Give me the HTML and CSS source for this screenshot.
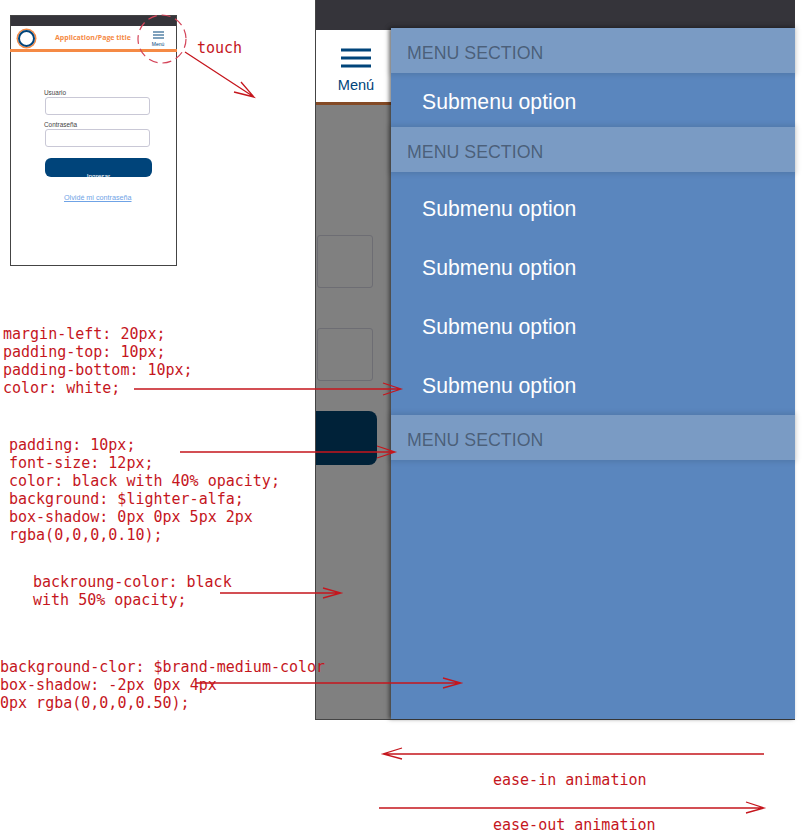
FILE: index.html
```html
<!DOCTYPE html>
<html lang="en">
<head>
    <meta charset="UTF-8">
    <meta name="viewport" content="width=device-width, initial-scale=1.0">
    <link rel="stylesheet" href="styles.css">
    <title>Menu spec</title>
</head>
<body>
    <div class="canvas">

        <div class="mini-phone">
            <div class="mini-status"></div>
            <div class="mini-header">
                <span class="mini-logo"></span>
                <span class="mini-title">Application/Page title</span>
                <div class="mini-menu">
                    <svg width="11" height="8" viewBox="0 0 11 8"><path d="M0 1h11M0 4h11M0 7h11" stroke="#00447a" stroke-width="1.2"/></svg>
                    <span>Menú</span>
                </div>
            </div>
            <div class="mini-form">
                <label class="mini-label">Usuario</label>
                <div class="mini-input"></div>
                <label class="mini-label">Contraseña</label>
                <div class="mini-input"></div>
                <div class="mini-button"><span>Ingresar</span></div>
                <a class="mini-link">Olvidé mi contraseña</a>
            </div>
        </div>

        <div class="device">
            <div class="device-status"></div>
            <div class="device-header">
                <div class="menu-toggle">
                    <svg width="30" height="20" viewBox="0 0 30 20"><path d="M0 2h30M0 10h30M0 18h30" stroke="#00447a" stroke-width="3"/></svg>
                    <span>Menú</span>
                </div>
            </div>
            <div class="device-body">
                <div class="ghost-input"></div>
                <div class="ghost-input"></div>
                <div class="ghost-button"></div>
            </div>
            <div class="drawer">
                <div class="menu-section">MENU SECTION</div>
                <div class="menu-group">
                    <div class="menu-option">Submenu option</div>
                </div>
                <div class="menu-section">MENU SECTION</div>
                <div class="menu-group menu-group-long">
                    <div class="menu-option">Submenu option</div>
                    <div class="menu-option">Submenu option</div>
                    <div class="menu-option">Submenu option</div>
                    <div class="menu-option">Submenu option</div>
                </div>
                <div class="menu-section">MENU SECTION</div>
            </div>
        </div>

        <svg class="marks" width="806" height="831" viewBox="0 0 806 831">
            <circle class="touch-ring" cx="162" cy="39" r="24"/>
            <path class="arrow" d="M185 52L254 97M241 82L254 97L234 92"/>
            <path class="arrow" d="M134 389H401M383 383L401 389L383 395"/>
            <path class="arrow" d="M180 452H395M377 446L395 452L377 458"/>
            <path class="arrow" d="M220 593H341M323 588L341 593L323 598"/>
            <path class="arrow" d="M196 683H461M443 678L461 683L443 688"/>
            <path class="arrow" d="M764 754H383M402 748L383 754L402 759"/>
            <path class="arrow" d="M379 808H764M746 802L764 808L746 813"/>
        </svg>

        <div class="note note-touch">touch</div>
        <div class="note note-option">margin-left: 20px;<br>padding-top: 10px;<br>padding-bottom: 10px;<br>color: white;</div>
        <div class="note note-section">padding: 10px;<br>font-size: 12px;<br>color: black with 40% opacity;<br>background: $lighter-alfa;<br>box-shadow: 0px 0px 5px 2px<br>rgba(0,0,0,0.10);</div>
        <div class="note note-overlay">backroung-color: black<br>with 50% opacity;</div>
        <div class="note note-drawer">background-clor: $brand-medium-color<br>box-shadow: -2px 0px 4px<br>0px rgba(0,0,0,0.50);</div>
        <div class="note note-in">ease-in animation</div>
        <div class="note note-out">ease-out animation</div>
    </div>
</body>
</html>
```
FILE: styles.css
```css
body {
    margin: 0;
    background-color: #fff;
    font-family: "Liberation Sans", Arial, sans-serif;
}

.canvas {
    position: relative;
    width: 806px;
    height: 831px;
}

/* small phone, top left */
.mini-phone {
    position: absolute;
    left: 10px;
    top: 15px;
    width: 165px;
    height: 249px;
    border: 1px solid #444;
    display: flex;
    flex-direction: column;
}

.mini-status {
    height: 10px;
    background-color: #35343a;
}

.mini-header {
    height: 23px;
    border-bottom: 3px solid #f58a45;
    margin: 0 -1px;
    padding: 0 10px 0 7px;
    display: flex;
    align-items: center;
}

.mini-logo {
    width: 13px;
    height: 13px;
    border: 2px solid #00447a;
    border-radius: 50%;
    box-shadow: 0 0 0 1.5px #f58a45;
    margin-left: 1px;
    margin-top: 1px;
}

.mini-title {
    flex: 1;
    margin-left: 20px;
    color: #f58a45;
    font-family: "Open Sans", sans-serif;
    font-size: 7px;
    font-weight: 700;
    white-space: nowrap;
}

.mini-menu {
    display: flex;
    flex-direction: column;
    align-items: center;
    width: 16px;
    margin-right: 1px;
    padding-top: 2px;
    color: #00447a;
    font-size: 5px;
}

.mini-menu svg {
    margin-bottom: 2px;
}

.mini-form {
    padding: 37px 0 0 33px;
    display: flex;
    flex-direction: column;
    align-items: flex-start;
}

.mini-label {
    height: 7px;
    line-height: 7px;
    font-size: 6.4px;
    color: #444;
    margin-bottom: 1px;
}

.mini-input {
    width: 103px;
    height: 16px;
    margin-left: 1px;
    margin-bottom: 6px;
    border: 1.5px solid #c9c8d6;
    border-radius: 3px;
}

.mini-button {
    width: 107px;
    height: 19px;
    margin-top: 5px;
    margin-left: 1px;
    background-color: #00447a;
    border-radius: 6px;
    color: #fff;
    font-size: 6.4px;
    text-align: center;
    overflow: hidden;
    line-height: 38px;
}

.mini-link {
    margin-top: 16px;
    margin-left: 20px;
    color: #6fa3e6;
    font-size: 7.2px;
    text-decoration: underline;
}

/* big phone with open drawer */
.device {
    position: absolute;
    left: 315px;
    top: 0;
    width: 480px;
    height: 720px;
    border-left: 1px solid #444;
    border-bottom: 1px solid #444;
    box-sizing: border-box;
    display: flex;
    flex-direction: column;
}

.device-status {
    height: 30px;
    background-color: #35343a;
}

.device-header {
    height: 72px;
    background-color: #fff;
    border-bottom: 3px solid #844a25;
}

.menu-toggle {
    width: 80px;
    padding-top: 18px;
    display: flex;
    flex-direction: column;
    align-items: center;
    color: #00447a;
    font-size: 14.6px;
}

.menu-toggle span {
    margin-top: 9px;
}

.device-body {
    flex: 1;
    background-color: #808080;
    padding-top: 130px;
    display: flex;
    flex-direction: column;
}

.ghost-input {
    width: 56px;
    height: 53px;
    margin-bottom: 40px;
    margin-left: 1px;
    border: 1px solid #6d6d73;
    border-radius: 3px;
    box-sizing: border-box;
}

.ghost-button {
    width: 61px;
    height: 54px;
    margin-top: -10px;
    background-color: #002239;
    border-radius: 0 8px 8px 0;
}

.drawer {
    position: absolute;
    left: 75px;
    top: 28px;
    right: 0;
    bottom: 0;
    background-color: #5a86be;
    box-shadow: -2px 0 4px 0 rgba(0, 0, 0, 0.5);
}

.menu-section {
    position: relative;
    height: 45px;
    line-height: 50px;
    padding-left: 16px;
    background-color: #7a9bc4;
    box-shadow: 0 0 5px 2px rgba(0, 0, 0, 0.1);
    color: rgba(0, 0, 0, 0.4);
    font-size: 17.8px;
}

.menu-group {
    height: 54px;
}

.menu-group-long {
    height: 243px;
    padding-top: 8px;
    box-sizing: border-box;
}

.menu-option {
    height: 59px;
    line-height: 58px;
    padding-left: 31px;
    color: #fff;
    font-size: 21.2px;
}

.menu-group:first-of-type .menu-option {
    height: 54px;
    line-height: 52px;
}

/* red annotations */
.marks {
    position: absolute;
    left: 0;
    top: 0;
}

.arrow {
    fill: none;
    stroke: #c5161d;
    stroke-width: 1.3;
}

.touch-ring {
    fill: none;
    stroke: #d4455a;
    stroke-width: 1.2;
    stroke-dasharray: 9 5;
}

.note {
    position: absolute;
    color: #c5161d;
    font-family: "DejaVu Sans Mono", monospace;
    font-size: 15px;
    line-height: 18px;
    white-space: nowrap;
}

.note-touch { left: 197px; top: 39px; }
.note-option { left: 3px; top: 325px; }
.note-section { left: 9px; top: 436px; }
.note-overlay { left: 33px; top: 573px; }
.note-drawer { left: 0; top: 658px; }
.note-in { left: 493px; top: 771px; }
.note-out { left: 493px; top: 819px; line-height: 12px; }
```
